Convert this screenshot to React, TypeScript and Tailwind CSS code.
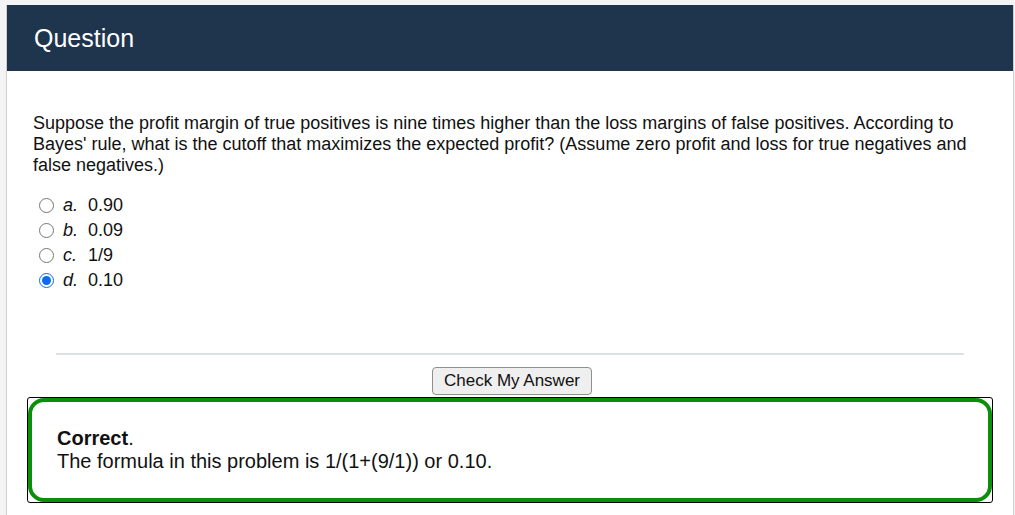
import React from "react";

const options = [
  { letter: "a.", value: "0.90" },
  { letter: "b.", value: "0.09" },
  { letter: "c.", value: "1/9" },
  { letter: "d.", value: "0.10", checked: true },
];

export default function App() {
  return (
    <div
      className="min-h-[515px] bg-[#f4f4f4] pt-[5px] pl-[6px] pr-[1px]"
      style={{ fontFamily: '"Liberation Sans", Arial, sans-serif' }}
    >
      <div className="bg-white border-x border-[#cfcfcf] min-h-[510px]">
        <div className="bg-[#1f344d] h-[66px] flex items-center px-[27px]">
          <h1 className="text-white text-[25px] leading-none">Question</h1>
        </div>
        <div className="px-[26px] pt-[42px]">
          <p className="text-[18px] leading-[21px] text-[#111]">
            Suppose the profit margin of true positives is nine times higher than the loss margins of false positives. According to Bayes' rule, what is the cutoff that maximizes the expected profit? (Assume zero profit and loss for true negatives and false negatives.)
          </p>
          <div className="mt-[17px] flex flex-col">
            {options.map((o) => (
              <label key={o.letter} className="flex items-center h-[25px] text-[18px] text-[#111]">
                <input
                  type="radio"
                  name="q"
                  defaultChecked={o.checked}
                  className="w-[15px] h-[15px] shrink-0 my-0 ml-[6px] mr-[9px] accent-[#0a6cf0]"
                />
                <span className="italic w-[25px]">{o.letter}</span>
                <span>{o.value}</span>
              </label>
            ))}
          </div>
        </div>
        <div className="mx-[49px] mt-[60px] h-[2px] bg-[#dde1e5]" />
        <div className="flex justify-center mt-[12px]">
          <button className="h-[28px] w-[160px] text-[17px] text-[#111] bg-[#efefef] border border-[#8f8f8f] rounded-[4px] translate-x-[2px]">
            Check My Answer
          </button>
        </div>
        <div className="mx-[20px] mt-[2px] border border-black rounded-[3px]">
          <div className="border-[4px] border-[#0b8f0b] rounded-[16px] px-[25px] pt-[25px] pb-[25px] text-[20px] leading-[23px] text-[#111]">
            <div>
              <b>Correct</b>.
            </div>
            <div>The formula in this problem is 1/(1+(9/1)) or 0.10.</div>
          </div>
        </div>
      </div>
    </div>
  );
}
